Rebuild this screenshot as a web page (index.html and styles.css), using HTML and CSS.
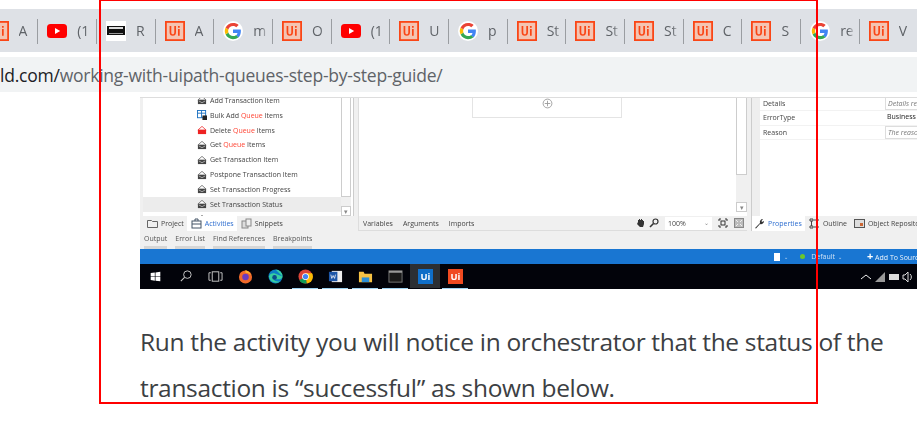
FILE: index.html
```html
<!DOCTYPE html>
<html lang="en">
<head>
<meta charset="utf-8">
<title>Working with UiPath Queues</title>
<link rel="stylesheet" href="styles.css">
</head>
<body>
<svg class="defs" width="0" height="0" aria-hidden="true">
  <symbol id="ui" viewBox="0 0 20 20"><rect width="20" height="20" fill="#fa4616"/><rect x="1.8" y="1.8" width="16.4" height="16.4" fill="#f4c4b2"/><path d="M4.6 5v6.2c0 2.4 1.2 3.6 3.2 3.6s3.2-1.2 3.2-3.6V5h-1.7v6.2c0 1.4-.5 2-1.5 2s-1.500-.6-1.500-2V5zM13 8h1.700v6.700H13zM13 5h1.700v1.700H13z" fill="#fa4616"/></symbol>
  <symbol id="yt" viewBox="0 0 20 14"><rect width="20" height="14" rx="3.500" fill="#f00"/><path d="M8 4l5.200 3L8 10z" fill="#fff"/></symbol>
  <symbol id="g" viewBox="0 0 20 20"><circle cx="10" cy="10" r="10" fill="#fff"/><g transform="translate(10 10) scale(1.25) translate(-10 -10)"><path d="M16.300 10.200c0-.5 0-1-.1-1.400H10v2.700h3.600c-.2.800-.6 1.500-1.300 2l2.100 1.600c1.200-1.200 1.900-2.900 1.900-4.900z" fill="#4285f4"/><path d="M10 16.500c1.800 0 3.300-.6 4.400-1.600l-2.100-1.600c-.6.400-1.400.7-2.300.7-1.800 0-3.200-1.200-3.700-2.800L4.100 12.800c1.100 2.200 3.300 3.700 5.900 3.700z" fill="#34a853"/><path d="M6.300 11.200c-.3-.8-.3-1.600 0-2.400L4.100 7.200c-.9 1.800-.9 3.800 0 5.600z" fill="#fbbc05"/><path d="M10 6c1 0 1.900.3 2.600 1l1.900-1.900C13.300 4 11.800 3.500 10 3.500c-2.600 0-4.800 1.500-5.900 3.700l2.200 1.600C6.800 7.200 8.200 6 10 6z" fill="#ea4335"/></g></symbol>
  <symbol id="act" viewBox="0 0 11 11"><path d="M5.500 1.500L10 5.500H1z" fill="#fff" stroke="#666" stroke-width=".9"/><path d="M1 5.500h9V10H1z" fill="#444"/><path d="M2 6.500l3.500 2 3.500-2" stroke="#ddd" stroke-width=".7" fill="none"/></symbol>
  <symbol id="act-red" viewBox="0 0 11 11"><path d="M5.500 1.500L10 5.500H1z" fill="#fff" stroke="#e33" stroke-width=".9"/><path d="M1 5.500h9V10H1z" fill="#e22"/></symbol>
</svg>

<header class="chrome">
  <nav class="tabs">
    <div class="tab"><svg class="fav"><use href="#ui"/></svg><span class="label">A</span></div>
    <div class="tab"><svg class="fav yt"><use href="#yt"/></svg><span class="label">(1</span></div>
    <div class="tab"><svg class="fav" viewBox="0 0 20 20"><rect width="20" height="20" fill="#fff"/><rect x="1" y="5" width="18" height="9" fill="#111"/><rect x="3" y="6" width="14" height="2" fill="#ddd"/><rect x="3" y="12" width="14" height="1" fill="#999"/></svg><span class="label">R</span></div>
    <div class="tab"><svg class="fav"><use href="#ui"/></svg><span class="label">A</span></div>
    <div class="tab"><svg class="fav"><use href="#g"/></svg><span class="label">m</span></div>
    <div class="tab"><svg class="fav"><use href="#ui"/></svg><span class="label">O</span></div>
    <div class="tab"><svg class="fav yt"><use href="#yt"/></svg><span class="label">(1</span></div>
    <div class="tab"><svg class="fav"><use href="#ui"/></svg><span class="label">U</span></div>
    <div class="tab"><svg class="fav"><use href="#g"/></svg><span class="label">p</span></div>
    <div class="tab"><svg class="fav"><use href="#ui"/></svg><span class="label">St</span></div>
    <div class="tab"><svg class="fav"><use href="#ui"/></svg><span class="label">St</span></div>
    <div class="tab"><svg class="fav"><use href="#ui"/></svg><span class="label">St</span></div>
    <div class="tab"><svg class="fav"><use href="#ui"/></svg><span class="label">C</span></div>
    <div class="tab"><svg class="fav"><use href="#ui"/></svg><span class="label">S</span></div>
    <div class="tab"><svg class="fav"><use href="#g"/></svg><span class="label">re</span></div>
    <div class="tab"><svg class="fav"><use href="#ui"/></svg><span class="label">V</span></div>
  </nav>
  <div class="urlbar"><span class="host">ld.com/</span>working-with-uipath-queues-step-by-step-guide/</div>
</header>

<main class="article">
  <figure class="shot">
    <div class="panes">
      <section class="left">
        <div class="left-body">
          <ul class="activities">
            <li><svg class="ai"><use href="#act"/></svg><span>Add Transaction Item</span></li>
            <li><svg class="ai" viewBox="0 0 11 11"><rect x=".5" y=".5" width="9" height="8" fill="#fff" stroke="#1a6fc0"/><path d="M.5 3.500h9M5 .5v8" stroke="#1a6fc0"/><rect x="6" y="6" width="5" height="5" fill="#222"/></svg><span>Bulk Add <b>Queue</b> Items</span></li>
            <li><svg class="ai"><use href="#act-red"/></svg><span>Delete <b>Queue</b> Items</span></li>
            <li><svg class="ai"><use href="#act"/></svg><span>Get <b>Queue</b> Items</span></li>
            <li><svg class="ai"><use href="#act"/></svg><span>Get Transaction Item</span></li>
            <li><svg class="ai"><use href="#act"/></svg><span>Postpone Transaction Item</span></li>
            <li><svg class="ai"><use href="#act"/></svg><span>Set Transaction Progress</span></li>
            <li class="sel"><svg class="ai"><use href="#act"/></svg><span>Set Transaction Status</span></li>
            <li><svg class="ai"><use href="#act"/></svg><span>Wait <b>Queue</b> Item</span></li>
          </ul>
          <div class="vscroll short"><i class="thumb"></i><i class="arrow">▾</i></div>
        </div>
        <div class="ptabs">
          <span class="ptab"><svg class="ti" viewBox="0 0 11 11"><path d="M.5 2.500h4l1 1h5v6h-10z" fill="none" stroke="#666"/></svg>Project</span>
          <span class="ptab on"><svg class="ti" viewBox="0 0 11 11"><rect x="1" y="3" width="9" height="7" fill="none" stroke="#456"/><path d="M1 6h9M4 3V1h3v2" stroke="#456" fill="none"/></svg>Activities</span>
          <span class="ptab"><svg class="ti" viewBox="0 0 11 11"><rect x="1" y="3" width="6" height="7" fill="#ddd" stroke="#888"/><rect x="5" y="1" width="5" height="7" fill="#eee" stroke="#888"/></svg>Snippets</span>
        </div>
      </section>

      <section class="center">
        <div class="canvas">
          <div class="canvas-main">
            <div class="seq"><svg class="plus" viewBox="0 0 10 10"><circle cx="5" cy="5" r="4" fill="none" stroke="#999" stroke-width=".8"/><path d="M5 2.500v5M2.500 5h5" stroke="#999" stroke-width=".8"/></svg></div>
          </div>
          <div class="vscroll tall"><i class="thumb"></i><i class="arrow">▾</i></div>
        </div>
        <div class="cbar">
          <span>Variables</span><span>Arguments</span><span>Imports</span>
          <span class="grow"></span>
          <svg class="tool hand" viewBox="0 0 10 10"><path d="M2 4V2l1 0v-1h1v1h1V1h1v1h1v1h1v3L7 9H4L1 6z" fill="#333"/></svg>
          <svg class="tool" viewBox="0 0 10 10"><circle cx="6.500" cy="3.500" r="2.500" fill="none" stroke="#333" stroke-width="1.200"/><path d="M4.500 5.500L1 9" stroke="#333" stroke-width="1.600"/></svg>
          <span class="zoom">100%<em>⌄</em></span>
          <svg class="tool" viewBox="0 0 10 10"><path d="M1 3V1h2M7 1h2v2M9 7v2H7M3 9H1V7" fill="none" stroke="#333"/><rect x="3" y="3" width="4" height="4" fill="none" stroke="#333"/></svg>
          <svg class="tool" viewBox="0 0 10 10"><rect x=".5" y=".5" width="9" height="9" fill="#bbb" stroke="#888"/><path d="M2 2l2 2M8 2L6 4M2 8l2-2M8 8L6 6" stroke="#eee"/></svg>
        </div>
      </section>

      <section class="right">
        <div class="props">
          <div class="prop"><span class="k">Details</span><span class="v hint">Details re</span></div>
          <div class="prop"><span class="k">ErrorType</span><span class="v plain">Business</span></div>
          <div class="prop"><span class="k">Reason</span><span class="v hint">The reaso</span></div>
        </div>
        <div class="ptabs rt">
          <span class="ptab on"><svg class="ti" viewBox="0 0 11 11"><path d="M1 10L6 5a3 3 0 0 1 3-4L7.500 3 8 4l2-1a3 3 0 0 1-4 3l-4 4.500z" fill="#333"/></svg>Properties</span>
          <span class="ptab"><svg class="ti" viewBox="0 0 11 11"><path d="M1 1h3v2H1zM1 8h3v2H1zM5 2h5M5 9h5M2.500 3v5" fill="none" stroke="#444"/></svg>Outline</span>
          <span class="ptab"><svg class="ti" viewBox="0 0 11 11"><rect x=".5" y="1.500" width="10" height="8" fill="#ddd" stroke="#555"/><rect x="6" y="5" width="3" height="3" fill="#c63"/></svg>Object Repository</span>
        </div>
      </section>
    </div>

    <div class="outbar">
      <span>Output</span><span>Error List</span><span>Find References</span><span>Breakpoints</span>
    </div>

    <div class="status">
      <span class="st-box"></span><em>⌄</em>
      <span class="dot"></span><span>Default</span><em>⌄</em>
      <span class="add"><b>+</b> Add To Source Control</span>
    </div>

    <div class="taskbar">
      <svg class="tk win" viewBox="0 0 16 16"><path d="M1 3l6-1v5.500H1zM8 2l7-1v6.500H8zM1 8.500h6V14l-6-1zM8 8.500h7V15l-7-1z" fill="#fff"/></svg>
      <svg class="tk" viewBox="0 0 16 16"><circle cx="10" cy="6" r="4" fill="none" stroke="#ccc"/><path d="M7 9l-4 4" stroke="#ccc" stroke-width="1.200"/></svg>
      <svg class="tk" viewBox="0 0 16 16"><path d="M3 4H1v8h2M13 4h2v8h-2" fill="none" stroke="#ccc"/><rect x="4.500" y="3" width="7" height="10" fill="none" stroke="#ccc"/></svg>
      <svg class="tk" viewBox="0 0 16 16"><circle cx="8" cy="8.500" r="7" fill="#f0692a"/><path d="M8 1c3 1 5 3 6 6-2-2-3-3-6-3z" fill="#fcb32c"/><circle cx="8" cy="8.500" r="3.500" fill="#6a3bc0"/></svg>
      <svg class="tk" viewBox="0 0 16 16"><circle cx="8" cy="8" r="7.500" fill="#0c7ec4"/><path d="M8 .5a7.500 7.500 0 0 1 7.500 7.500c0 2-2 3-4 3H6c1 2 4 3 7 2a7.500 7.500 0 0 1-12-5C2 5 5 4 8 5s5 2 7.500 3" fill="#38cfa0"/><circle cx="7" cy="9" r="2.500" fill="#0a4a8a"/></svg>
      <span class="tile bar"><svg class="tk" viewBox="0 0 16 16"><circle cx="8" cy="8" r="7.500" fill="#db4437"/><path d="M8 8L1.500 12a7.500 7.500 0 0 0 8 3.300z" fill="#0f9d58"/><path d="M8 4.500h7a7.500 7.500 0 0 1-5.500 11z" fill="#fbbc05"/><circle cx="8" cy="8" r="3.600" fill="#fff"/><circle cx="8" cy="8" r="2.800" fill="#4285f4"/></svg></span>
      <span class="tile bar"><svg class="tk" viewBox="0 0 16 16"><rect x="4" y="2" width="11" height="12" fill="#eee"/><rect x="1" y="3" width="9" height="10" fill="#1d56a8"/><path d="M3 6l1 4 1.500-3 1.500 3 1-4" stroke="#fff" fill="none" stroke-width=".8"/></svg></span>
      <span class="tile bar"><svg class="tk" viewBox="0 0 16 16"><path d="M1 3h5l1 2h8v9H1z" fill="#f6c244"/><rect x="4" y="9" width="8" height="5" fill="#2a8fd8"/></svg></span>
      <span class="tile bar"><svg class="tk" viewBox="0 0 16 16"><rect x="1" y="2" width="14" height="12" fill="#1a1a1a" stroke="#777"/><rect x="1" y="2" width="14" height="2" fill="#999"/></svg></span>
      <span class="tile active"><svg class="tk" viewBox="0 0 16 16"><rect width="16" height="16" fill="#0f6ec8"/><text x="8" y="12" class="tk-text">Ui</text></svg></span>
      <span class="tile bar"><svg class="tk" viewBox="0 0 16 16"><rect width="16" height="16" fill="#f04a20"/><text x="8" y="12" class="tk-text">Ui</text></svg></span>
      <span class="grow"></span>
      <svg class="tray" viewBox="0 0 12 12"><path d="M1 8l5-4 5 4" fill="none" stroke="#eee" stroke-width="1"/></svg>
      <svg class="tray" viewBox="0 0 12 12"><path d="M1 11L11 1v10z" fill="#999"/></svg>
      <svg class="tray" viewBox="0 0 12 12"><rect x="1" y="3" width="10" height="6" fill="#ddd"/></svg>
      <svg class="tray" viewBox="0 0 12 12"><path d="M1 4h2l3-3v10L3 8H1z" fill="none" stroke="#ddd"/><path d="M8 3a4 4 0 0 1 0 6" fill="none" stroke="#ddd"/></svg>
    </div>
  </figure>

  <p class="copy">Run the activity you will notice in orchestrator that the status of the transaction is “successful” as shown below.</p>
</main>

<div class="marker" aria-hidden="true"></div>
</body>
</html>
```

FILE: styles.css
```css
* { box-sizing: border-box; }
html, body { margin: 0; padding: 0; }
body {
  width: 917px;
  height: 428px;
  overflow: hidden;
  background: #fff;
  position: relative;
  font-family: "Open Sans", "Noto Sans", sans-serif;
}
.defs { position: absolute; }

/* browser chrome */
.chrome { padding-top: 9px; }
.tabs {
  display: flex;
  height: 43px;
  align-items: center;
  background: #dee1e6;
  overflow: hidden;
}
.tab {
  flex: 0 0 58.7px;
  height: 25px;
  display: flex;
  align-items: center;
  padding-left: 9px;
  gap: 10px;
  border-right: 1px solid #9a9da1;
  margin-top: 1px;
}
.tab:first-child { margin-left: -20.5px; }
.fav { width: 20px; height: 20px; flex: none; }
.label {
  width: 15px;
  overflow: hidden;
  white-space: nowrap;
  font: 14px/20px "Open Sans", sans-serif;
  color: #5f6368;
  -webkit-mask-image: linear-gradient(90deg, #000 55%, transparent);
  mask-image: linear-gradient(90deg, #000 55%, transparent);
}
.urlbar {
  margin-top: 5px;
  height: 35px;
  background: #f1f3f4;
  font-size: 17.5px;
  letter-spacing: -.23px;
  line-height: 37px;
  color: #5f6368;
  white-space: nowrap;
}
.host { color: #202124; }

/* article */
.article { margin-top: 5px; padding-left: 140px; }
.shot {
  margin: 0;
  width: 777px;
  height: 192px;
  border-top: 1px solid #ddd;
  background: #f0f0f0;
  display: flex;
  flex-direction: column;
  overflow: hidden;
  font-size: 7px;
  color: #444;
  filter: blur(.3px);
}
.panes { display: flex; height: 133px; padding-left: 3px; flex: none; }

.left { width: 211px; flex: none; display: flex; flex-direction: column; }
.left-body { height: 118px; display: flex; background: #fff; border-right: 1px solid #ccc; overflow: hidden; }
.activities { list-style: none; margin: -5px 0 0; padding: 0; flex: 1; }
.activities li {
  height: 14.85px;
  display: flex;
  align-items: center;
  gap: 3px;
  padding-left: 54px;
  white-space: nowrap;
}
.activities li.sel { background: #ececec; }
.activities b { font-weight: 400; color: #f43; }
.ai { width: 10px; height: 10px; flex: none; }

.vscroll { width: 10px; flex: none; display: flex; flex-direction: column; background: #f0f0f0; }
.vscroll .thumb { display: block; flex: 1; background: #fff; border: 1px solid #cdcdcd; border-top: 0; }
.vscroll .arrow {
  height: 10px; flex: none; font-style: normal; font-size: 7px; line-height: 9px; text-align: center;
  color: #888; background: #fff; border: 1px solid #ccc;
}
.vscroll.short { margin-right: 2px; }
.vscroll.short .thumb { margin-bottom: 9px; }
.vscroll.tall .thumb { margin-bottom: 27px; }

.ptabs { display: flex; height: 15px; align-items: center; flex: none; }
.ptab { display: flex; align-items: center; gap: 3px; height: 15px; padding: 0 3px 0 4px; white-space: nowrap; }
.ptab.on { background: #fff; color: #2f6fd0; }
.ti { width: 11px; height: 11px; flex: none; }

.center { width: 389px; flex: none; margin-left: 4px; display: flex; flex-direction: column; height: 133px; }
.canvas { flex: 1; display: flex; background: #fff; min-height: 0; border-left: 1px solid #ddd; }
.canvas-main { flex: 1; padding-left: 113px; }
.seq {
  width: 150px; height: 20px; background: #fff;
  border: 1px solid #e4e4e4; border-top: 0;
  display: flex; justify-content: center; align-items: flex-start;
}
.plus { width: 11px; height: 11px; }
.canvas .vscroll { width: 11px; margin-bottom: 4px; }
.cbar { height: 15px; display: flex; align-items: center; gap: 10px; padding: 0 3px 0 4px; background: #f0f0f0; border-bottom: 1px solid #ddd; border-left: 1px solid #ddd; }
.cbar .grow { flex: 1; }
.tool { width: 10px; height: 10px; flex: none; margin-left: -4px; }
.tool.hand { margin-left: 0; margin-right: -3px; }
.zoom { width: 47px; height: 13px; background: #fff; display: flex; justify-content: space-between; align-items: center; padding: 0 3px; margin-left: -4px; }
.zoom em { font-style: normal; color: #888; font-size: 6px; }

.right { flex: 1; margin-left: 4px; display: flex; flex-direction: column; border-left: 1px solid #ccc; }
.props { height: 118px; background: #fff; border-left: 8px solid #eee; overflow: hidden; }
.prop { display: flex; height: 14.5px; align-items: center; padding-left: 3px; border-bottom: 1px solid #f2f2f2; }
.prop:first-child { margin-top: -1.5px; }
.k { width: 122px; }
.v { flex: 1; padding-left: 2px; height: 13px; line-height: 12px; white-space: nowrap; }
.v.hint { font-style: italic; color: #777; border: 1px solid #ddd; border-right: 0; }
.v.plain { color: #222; }
.rt .ptab.on { padding-left: 2px; }

.outbar { display: flex; height: 18px; padding-left: 4px; gap: 8px; align-items: flex-start; flex: none; }
.outbar span { height: 18px; padding-top: 2px; line-height: 12px; border-bottom: 3px solid #d6d6d6; color: #555; }

.status {
  height: 15px; flex: none; background: #1976d2; color: #cfe2f6;
  display: flex; align-items: center; justify-content: flex-end; gap: 3px; white-space: nowrap;
}
.st-box { width: 6px; height: 8px; background: #fff; margin-right: 1px; }
.status em { font-style: normal; font-size: 5px; margin-right: 9px; }
.dot { width: 5px; height: 5px; border-radius: 50%; background: #6bc72c; margin-right: 3px; }
.add { margin-left: 13px; color: #eaf3fc; width: 50px; overflow: hidden; }
.add b { font-size: 11px; line-height: 10px; font-weight: 700; color: #fff; }

.taskbar { height: 25px; flex: none; background: #02030a; display: flex; align-items: center; padding-right: 1px; }
.taskbar .grow { flex: 1; }
.tk { width: 15px; height: 15px; flex: none; margin: 0 7.5px; }
.tk.win { width: 11px; height: 11px; margin: 0 9.5px; }
.tile { width: 30px; height: 25px; display: flex; align-items: center; justify-content: center; flex: none; border-bottom: 1px solid #02030a; }
.tile .tk { margin: 0; }
.tile.bar { border-image: linear-gradient(90deg, #02030a 3px, #9fd3f2 3px, #9fd3f2 27px, #02030a 27px) 1; }
.tile.active { background: #2c2f33; }
.tk-text { font: 700 10px "Open Sans", sans-serif; fill: #fff; text-anchor: middle; }
.tray { width: 12px; height: 12px; flex: none; margin-right: 2px; }

.copy {
  margin: 30px 0 0;
  width: 760px;
  font-size: 24.5px;
  letter-spacing: -.32px;
  line-height: 46px;
  color: #3c4043;
}

/* annotation drawn over the capture */
.marker {
  position: absolute;
  left: 99px;
  top: -1px;
  width: 719px;
  height: 405px;
  border: 2px solid #f00;
  pointer-events: none;
}
```
